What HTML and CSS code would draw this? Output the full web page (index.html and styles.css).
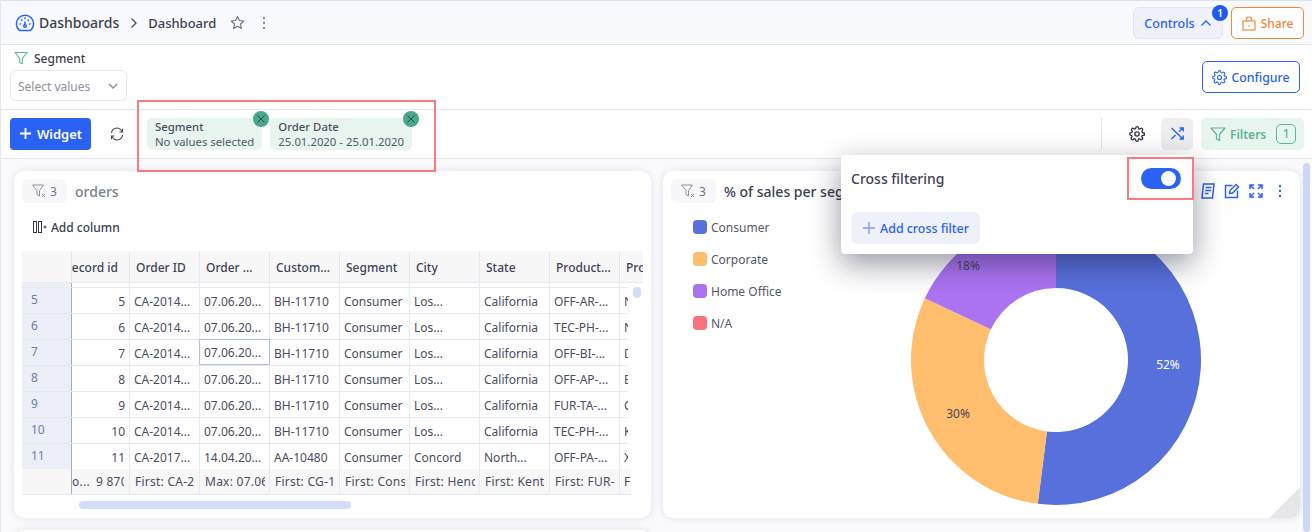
FILE: index.html
```html
<!DOCTYPE html>
<html lang="en">
<head>
<meta charset="utf-8">
<title>Dashboard</title>
<link rel="stylesheet" href="styles.css">
</head>
<body>
<div class="page">
  <header class="topbar">
    <div class="crumbs">
      <svg class="ico-gauge" width="20" height="20" viewBox="0 0 20 20" fill="none" stroke="#2962f5" stroke-width="1.5" stroke-linecap="round"><path d="M5 17.500h10a1 1 0 0 0 .8-.4A8.600 8.600 0 1 0 4.200 17.100a1 1 0 0 0 .8.4z"/><circle cx="10" cy="13" r="1.300"/><path d="M10 11.500V9M5 11h.6M14.400 11h.6M6.500 7l.4.4M13.500 7l-.4.4M10 4.800v.6"/></svg>
      <span class="crumb-root">Dashboards</span>
      <svg class="crumb-sep" width="8" height="12" viewBox="0 0 8 12" fill="none" stroke="#4a4d5e" stroke-width="1.300"><path d="M1.500 1.500 6 6l-4.500 4.500"/></svg>
      <span class="crumb-page">Dashboard</span>
      <svg class="star" width="15" height="15" viewBox="0 0 16 16" fill="none" stroke="#6e7182" stroke-width="1.200" stroke-linejoin="round"><path d="m8 1.500 2 4.300 4.700.6-3.500 3.200.9 4.700L8 12l-4.100 2.300.9-4.700L1.300 6.400 6 5.800z"/></svg>
      <svg class="kebab" width="4" height="14" viewBox="0 0 4 14" fill="#6e7182"><circle cx="2" cy="2" r="1.100"/><circle cx="2" cy="7" r="1.100"/><circle cx="2" cy="12" r="1.100"/></svg>
    </div>
    <div class="top-actions">
      <button class="btn-controls">Controls
        <svg width="12" height="8" viewBox="0 0 12 8" fill="none" stroke="#2962f5" stroke-width="1.300"><path d="M1.500 6.500 6 2l4.500 4.500"/></svg>
        <span class="badge-one">1</span>
      </button>
      <button class="btn-share">
        <svg width="14" height="15" viewBox="0 0 14 15" fill="none" stroke="#f0883e" stroke-width="1.200"><rect x="1" y="5" width="12" height="9"/><path d="M4.500 5V3.500a2.500 2.500 0 0 1 5 0V5M7 9v1.500"/></svg>
        Share
      </button>
    </div>
  </header>

  <section class="controls">
    <div class="control-field">
      <div class="control-label">
        <svg width="14" height="14" viewBox="0 0 14 14" fill="none" stroke="#5fb39a" stroke-width="1.100" stroke-linejoin="round"><path d="M1 1.500h12L8.300 7.500v5.300L5.700 11.500v-4z"/></svg>
        Segment
      </div>
      <div class="select">
        <span>Select values</span>
        <svg width="10" height="7" viewBox="0 0 10 7" fill="none" stroke="#8d909e" stroke-width="1.500"><path d="m1 1 4 4 4-4"/></svg>
      </div>
    </div>
    <button class="btn-configure">
      <svg width="15" height="15" viewBox="0 0 24 24" fill="none" stroke="#2962f5" stroke-width="1.800"><circle cx="12" cy="12" r="3.200"/><path d="M19.400 15a1.700 1.700 0 0 0 .3 1.800l.1.100a2 2 0 1 1-2.900 2.900l-.1-.1a1.700 1.700 0 0 0-2.800 1.200V21a2 2 0 1 1-4 0v-.1A1.700 1.700 0 0 0 7 19.700l-.1.100A2 2 0 1 1 4 16.900l.1-.1a1.700 1.700 0 0 0-1.200-2.800H3a2 2 0 1 1 0-4h.1A1.700 1.700 0 0 0 4.300 7l-.1-.1A2 2 0 1 1 7.100 4l.1.100a1.700 1.700 0 0 0 1.800.3h.1a1.700 1.700 0 0 0 1-1.500V3a2 2 0 1 1 4 0v.1a1.700 1.700 0 0 0 2.800 1.200l.1-.1A2 2 0 1 1 20 7.100l-.1.1a1.700 1.700 0 0 0-.3 1.800v.1a1.700 1.700 0 0 0 1.500 1h.2a2 2 0 1 1 0 4h-.1a1.700 1.700 0 0 0-1.800.9z"/></svg>
      Configure
    </button>
  </section>

  <section class="toolbar">
    <div class="tool-left">
      <button class="btn-widget">
        <svg width="13" height="13" viewBox="0 0 13 13" fill="none" stroke="#fff" stroke-width="1.800"><path d="M6.500 1v11M1 6.500h11"/></svg>
        Widget
      </button>
      <svg class="refresh" width="14" height="14" viewBox="0 0 14 14" fill="none" stroke="#44475a" stroke-width="1.100"><path d="M1.500 6A5.500 5.500 0 0 1 11.500 3.500L12.500 5M12.500 1.800V5H9.500M12.500 8A5.500 5.500 0 0 1 2.500 10.500L1.500 9M1.500 12.200V9h3"/></svg>
      <div class="chips">
        <div class="chip">
          <b>Segment</b><span>No values selected</span>
          <i class="chip-x"><svg width="8" height="8" viewBox="0 0 8 8" stroke="#22483d" stroke-width=".9"><path d="m.5.500 7 7M7.500.500l-7 7"/></svg></i>
        </div>
        <div class="chip">
          <b>Order Date</b><span>25.01.2020 - 25.01.2020</span>
          <i class="chip-x"><svg width="8" height="8" viewBox="0 0 8 8" stroke="#22483d" stroke-width=".9"><path d="m.5.500 7 7M7.500.500l-7 7"/></svg></i>
        </div>
      </div>
    </div>
    <div class="tool-right">
      <span class="tool-sep"></span>
      <svg class="gear" width="16" height="16" viewBox="0 0 24 24" fill="none" stroke="#33364a" stroke-width="2"><circle cx="12" cy="12" r="3.200"/><path d="M19.400 15a1.700 1.700 0 0 0 .3 1.800l.1.100a2 2 0 1 1-2.900 2.900l-.1-.1a1.700 1.700 0 0 0-2.800 1.200V21a2 2 0 1 1-4 0v-.1A1.700 1.700 0 0 0 7 19.700l-.1.100A2 2 0 1 1 4 16.900l.1-.1a1.700 1.700 0 0 0-1.200-2.800H3a2 2 0 1 1 0-4h.1A1.700 1.700 0 0 0 4.300 7l-.1-.1A2 2 0 1 1 7.100 4l.1.100a1.700 1.700 0 0 0 1.800.3h.1a1.700 1.700 0 0 0 1-1.500V3a2 2 0 1 1 4 0v.1a1.700 1.700 0 0 0 2.800 1.200l.1-.1A2 2 0 1 1 20 7.100l-.1.1a1.700 1.700 0 0 0-.3 1.800v.1a1.700 1.700 0 0 0 1.500 1h.2a2 2 0 1 1 0 4h-.1a1.700 1.700 0 0 0-1.800.9z"/></svg>
      <button class="btn-shuffle">
        <svg width="13" height="13" viewBox="0 0 13 13" fill="none" stroke="#2962f5" stroke-width="1.400"><path d="M.5 1 12 12M.5 12l4-4M8 4.700 12 1M8.500 1H12.200v3.500M8.500 12h3.700V8.500"/></svg>
      </button>
      <button class="btn-filters">
        <svg width="16" height="16" viewBox="0 0 16 16" fill="none" stroke="#5fb39a" stroke-width="1.200" stroke-linejoin="round"><path d="M1 2h14L9.500 8.500v6L6.500 13V8.500z"/></svg>
        Filters
        <span class="filters-count">1</span>
      </button>
    </div>
  </section>

  <main class="board">
    <article class="card">
      <div class="card-head">
        <span class="filter-chip">
          <svg width="15" height="14" viewBox="0 0 15 14" fill="none" stroke="#8d909e" stroke-width="1"><path d="M.5 1h11L7.500 6.500v5.500L5 10.500v-4zM10 10l3 3M13 10l-3 3"/></svg>
          3
        </span>
        <span class="card-title muted">orders</span>
      </div>
      <div class="add-column">
        <svg width="14" height="12" viewBox="0 0 14 12" fill="none" stroke="#33364a" stroke-width="1"><rect x=".5" y=".5" width="3" height="11"/><rect x="5.500" y=".5" width="3" height="11"/><path d="M10.500 6h3M12 4.500v3"/></svg>
        Add column
      </div>
      <div class="table">
        <div class="t-head">
          <div class="idx"></div>
          <div class="c c0 th"><span>Record id</span></div>
          <div class="c th">Order ID</div>
          <div class="c th">Order ...</div>
          <div class="c th">Custom...</div>
          <div class="c th">Segment</div>
          <div class="c th">City</div>
          <div class="c th">State</div>
          <div class="c th">Product...</div>
          <div class="c th last">Pro</div>
        </div>
        <div class="t-gap"><div class="idx"></div><div class="c c0"></div><div class="c"></div><div class="c"></div><div class="c"></div><div class="c"></div><div class="c"></div><div class="c"></div><div class="c"></div><div class="c last"></div></div>
        <div class="t-body">
          <div class="row"><div class="idx">5</div><div class="c c0 num">5</div><div class="c">CA-2014...</div><div class="c">07.06.20...</div><div class="c">BH-11710</div><div class="c">Consumer</div><div class="c">Los...</div><div class="c">California</div><div class="c">OFF-AR-...</div><div class="c last">N</div></div>
          <div class="row"><div class="idx">6</div><div class="c c0 num">6</div><div class="c">CA-2014...</div><div class="c">07.06.20...</div><div class="c">BH-11710</div><div class="c">Consumer</div><div class="c">Los...</div><div class="c">California</div><div class="c">TEC-PH-...</div><div class="c last">N</div></div>
          <div class="row"><div class="idx">7</div><div class="c c0 num">7</div><div class="c">CA-2014...</div><div class="c selected">07.06.20...</div><div class="c">BH-11710</div><div class="c">Consumer</div><div class="c">Los...</div><div class="c">California</div><div class="c">OFF-BI-...</div><div class="c last">D</div></div>
          <div class="row"><div class="idx">8</div><div class="c c0 num">8</div><div class="c">CA-2014...</div><div class="c">07.06.20...</div><div class="c">BH-11710</div><div class="c">Consumer</div><div class="c">Los...</div><div class="c">California</div><div class="c">OFF-AP-...</div><div class="c last">E</div></div>
          <div class="row"><div class="idx">9</div><div class="c c0 num">9</div><div class="c">CA-2014...</div><div class="c">07.06.20...</div><div class="c">BH-11710</div><div class="c">Consumer</div><div class="c">Los...</div><div class="c">California</div><div class="c">FUR-TA-...</div><div class="c last">C</div></div>
          <div class="row"><div class="idx">10</div><div class="c c0 num">10</div><div class="c">CA-2014...</div><div class="c">07.06.20...</div><div class="c">BH-11710</div><div class="c">Consumer</div><div class="c">Los...</div><div class="c">California</div><div class="c">TEC-PH-...</div><div class="c last">K</div></div>
          <div class="row"><div class="idx">11</div><div class="c c0 num">11</div><div class="c">CA-2017...</div><div class="c">14.04.20...</div><div class="c">AA-10480</div><div class="c">Consumer</div><div class="c">Concord</div><div class="c">North...</div><div class="c">OFF-PA-...</div><div class="c last">X</div></div>
        </div>
        <div class="t-foot">
          <div class="idx"></div>
          <div class="c c0 foot-split"><span>o...</span><span class="foot-sum">9 870</span></div>
          <div class="c"><span class="clip">First: CA-2014</span></div>
          <div class="c"><span class="clip">Max: 07.06.2014</span></div>
          <div class="c"><span class="clip">First: CG-12520</span></div>
          <div class="c"><span class="clip">First: Consumer</span></div>
          <div class="c"><span class="clip">First: Henderson</span></div>
          <div class="c"><span class="clip">First: Kentucky</span></div>
          <div class="c"><span class="clip">First: FUR-BO</span></div>
          <div class="c last">F</div>
        </div>
        <span class="v-thumb"></span>
      </div>
      <div class="h-track"><span class="h-thumb"></span></div>
    </article>

    <article class="card chart-card">
      <div class="card-head">
        <span class="filter-chip">
          <svg width="15" height="14" viewBox="0 0 15 14" fill="none" stroke="#8d909e" stroke-width="1"><path d="M.5 1h11L7.500 6.500v5.500L5 10.500v-4zM10 10l3 3M13 10l-3 3"/></svg>
          3
        </span>
        <span class="card-title">% of sales per segment</span>
        <div class="card-icons">
          <svg width="14" height="16" viewBox="0 0 14 16" fill="none" stroke="#2962f5" stroke-width="1.500"><path d="M2.500 1h10.500L11.500 15H1z"/><path d="M4.500 4.500h6M4.200 7.500h6M4 10.500h3.500"/></svg>
          <svg width="16" height="16" viewBox="0 0 16 16" fill="none" stroke="#2962f5" stroke-width="1.500"><path d="M8.500 2.500H1.500v12h12V7.500"/><path d="m5.500 10.500.5-3L12 1.500l2.500 2.500-6 6z"/></svg>
          <svg width="14" height="14" viewBox="0 0 14 14" fill="none" stroke="#2962f5" stroke-width="1.500"><path d="M1 5V1h4M9 1h4v4M13 9v4H9M5 13H1V9M1.500 1.500l3.500 3.500M12.500 1.500 9 5M12.500 12.500 9 9M1.500 12.500 5 9"/></svg>
          <svg class="card-kebab" width="4" height="14" viewBox="0 0 4 14" fill="#2962f5"><circle cx="2" cy="2" r="1.200"/><circle cx="2" cy="7" r="1.200"/><circle cx="2" cy="12" r="1.200"/></svg>
        </div>
      </div>
      <div class="chart-body">
        <ul class="legend">
          <li><i class="dot dot-blue"></i>Consumer</li>
          <li><i class="dot dot-orange"></i>Corporate</li>
          <li><i class="dot dot-purple"></i>Home Office</li>
          <li><i class="dot dot-red"></i>N/A</li>
        </ul>
        <svg class="pie" width="292" height="292" viewBox="-146 -146 292 292">
          <path fill="#5870dc" d="M0-145A145 145 0 1 1-18.200 143.850L-9.040 71.430A72 72 0 1 0 0-72z"/>
          <path fill="#ffbd6e" d="M-18.200 143.850A145 145 0 0 1-131.200-61.700L-65.150-30.660A72 72 0 0 0-9.040 71.430z"/>
          <path fill="#ab73f2" d="M-131.200-61.700A145 145 0 0 1 0-145V-72A72 72 0 0 0-65.150-30.660z"/>
          <text x="112" y="9" class="pie-label light" text-anchor="middle">52%</text>
          <text x="-98" y="58" class="pie-label" text-anchor="middle">30%</text>
          <text x="-88" y="-90" class="pie-label" text-anchor="middle">18%</text>
        </svg>
      </div>
      <span class="fold"></span>
    </article>

    <article class="card stub"></article>
  </main>

  <span class="page-scroll"></span>

  <aside class="popover">
    <div class="pop-head">
      <span>Cross filtering</span>
      <span class="toggle"><i></i></span>
    </div>
    <button class="btn-add-cross">
      <svg width="14" height="14" viewBox="0 0 14 14" fill="none" stroke="#7f9df5" stroke-width="1.400"><path d="M7 1v12M1 7h12"/></svg>
      Add cross filter
    </button>
  </aside>

  <span class="mark mark-chips"></span>
  <span class="mark mark-toggle"></span>
</div>
</body>
</html>
```

FILE: styles.css
```css
* { box-sizing: border-box; }
html, body { margin: 0; padding: 0; }
body { font-family: "Noto Sans", "Open Sans", sans-serif; font-size: 12px; color: #3f4254; background: #fff; }
button { font-family: inherit; cursor: pointer; }

.page { position: relative; width: 1312px; height: 532px; overflow: hidden; display: flex; flex-direction: column; border-left: 1px solid #e4e6ee; }

.topbar { flex: none; height: 45px; display: flex; align-items: center; justify-content: space-between; padding: 0 8px 0 14px; background: #f8f9fd; border-top: 1px solid #dfe1e8; border-bottom: 1px solid #e4e6ee; }
.crumbs { display: flex; align-items: center; }
.crumb-root { margin-left: 4px; font-size: 14px; font-weight: 500; color: #3c4050; }
.crumb-sep { margin-left: 11px; }
.crumb-page { margin-left: 10px; font-size: 13px; font-weight: 500; color: #3c4050; }
.star { margin-left: 14px; }
.kebab { margin-left: 17px; }

.top-actions { display: flex; gap: 8px; }
.btn-controls { position: relative; width: 90px; height: 32px; display: flex; align-items: center; justify-content: center; gap: 5px; padding: 1px 0 0; background: #eef1f9; border: 1px solid #e2e6f1; border-radius: 6px; font-size: 12.5px; font-weight: 500; color: #2962f5; }
.badge-one { position: absolute; top: -3px; right: -6px; width: 16px; height: 16px; border-radius: 50%; background: #1f5af0; color: #fff; font-size: 10px; font-weight: 600; line-height: 16px; text-align: center; }
.btn-share { width: 73px; height: 32px; display: flex; align-items: center; justify-content: center; gap: 5px; padding: 1px 0 0; background: #fff; border: 1px solid #f0883e; border-radius: 5px; font-size: 12px; font-weight: 500; color: #f0883e; }

.controls { flex: none; height: 65px; display: flex; align-items: flex-start; justify-content: space-between; padding: 4px 12px 0 9px; background: #fff; border-bottom: 1px solid #e4e6ee; }
.control-label { display: flex; align-items: center; gap: 6px; height: 18px; margin: 0 0 3px 4px; font-size: 12px; font-weight: 500; color: #3c4050; }
.select { width: 117px; height: 31px; display: flex; align-items: center; justify-content: space-between; padding: 1px 8px 0 7px; border: 1px solid #e6e7ec; border-radius: 6px; color: #8d909e; font-size: 12px; }
.btn-configure { margin-top: 12px; width: 98px; height: 32px; display: flex; align-items: center; justify-content: center; gap: 4px; padding: 0; background: #fff; border: 1px solid #2962f5; border-radius: 5px; font-size: 12.3px; font-weight: 500; color: #2962f5; }

.toolbar { flex: none; height: 49px; display: flex; align-items: center; justify-content: space-between; padding: 0 8px 1px 9px; background: #fff; border-bottom: 1px solid #e4e6ee; }
.tool-left, .tool-right { display: flex; align-items: center; }
.btn-widget { width: 81px; height: 32px; display: flex; align-items: center; justify-content: center; gap: 5px; padding: 0; background: #2962f5; border: 0; border-radius: 4px; color: #fff; font-size: 13px; font-weight: 600; }
.refresh { margin-left: 19px; }
.chips { display: flex; gap: 8px; margin-left: 23px; }
.chip { position: relative; height: 32px; padding: 0 8px; display: flex; flex-direction: column; justify-content: center; background: #e8f5ef; border-radius: 5px; font-size: 11.35px; line-height: 15px; color: #555868; white-space: nowrap; }
.chip b { font-weight: 500; color: #4a4d5e; }
.chip-x { position: absolute; top: -7px; right: -7px; width: 16px; height: 16px; display: flex; align-items: center; justify-content: center; border-radius: 50%; background: #4aa68c; }

.tool-sep { width: 1px; height: 32px; background: #e4e6ee; }
.gear { margin-left: 27px; }
.btn-shuffle { margin-left: 16px; width: 32px; height: 32px; display: flex; align-items: center; justify-content: center; padding: 0; background: #eeeeef; border: 0; border-radius: 5px; }
.btn-filters { margin-left: 8px; width: 103px; height: 32px; display: flex; align-items: center; gap: 4px; padding: 1px 0 0 9px; background: #e8f5ef; border: 0; border-radius: 5px; color: #5fb39a; font-size: 12px; font-weight: 600; }
.filters-count { margin-left: 6px; width: 20px; height: 20px; border: 1px solid #5fb39a; border-radius: 5px; line-height: 18px; text-align: center; font-weight: 500; }

.board { flex: 1; display: grid; grid-template-columns: 637px 637px; grid-auto-rows: 347px; gap: 12px; padding: 12px 0 0 13px; background: #fafafc; overflow: hidden; }
.card { position: relative; background: #fff; border-radius: 10px; box-shadow: 0 0 7px rgba(190, 195, 215, .45); padding: 8px; }
.card-head { display: flex; align-items: center; height: 24px; }
.filter-chip { width: 45px; height: 24px; display: flex; align-items: center; justify-content: center; gap: 3px; background: #f7f7f9; border-radius: 6px; color: #6e7182; font-size: 12px; }
.card-title { margin-left: 8px; font-size: 14px; font-weight: 500; color: #3c4050; white-space: nowrap; }
.card-title.muted { color: #7b7f8f; }

.add-column { display: flex; align-items: center; gap: 4px; height: 20px; margin: 14px 0 0 11px; font-size: 12px; font-weight: 500; color: #3c4050; }

.table { position: relative; margin-top: 14px; width: 621px; height: 244px; overflow: hidden; font-size: 12px; color: #4a4d5e; }
.t-head, .t-gap, .row, .t-foot { display: flex; white-space: nowrap; }
.idx { flex: none; width: 50px; border-right: 1px solid #a7aabf; padding-left: 9px; }
.c { flex: none; width: 70px; overflow: hidden; padding: 0 4px; border-right: 1px solid #e8e9ef; }
.c0 { width: 58px; }
.last { border-right: 0; }

.t-head { width: 621px; height: 32px; background: #f7f7f8; border-bottom: 1px solid #e8e9f2; align-items: stretch; line-height: 34px; }
.t-head .idx { border-right: 1px solid #e4e5ea; }
.th { padding: 0 6px; font-weight: 500; color: #3f4254; }
.th.c0 { display: flex; justify-content: flex-end; padding: 0 11px 0 0; }
.th.c0 span { flex: none; }
.t-gap { width: 606px; height: 4px; }
.t-gap .idx { background: #eceff8; }
.t-gap .c { border-right-color: #e8e9ef; }
.t-body { width: 606px; overflow: hidden; border-top: 1px solid #e8e9ef; }
.row { height: 26px; line-height: 27px; border-bottom: 1px solid #e8e9ef; }
.row .idx { background: #eceff8; color: #6d7ea5; line-height: 24px; }
.num { text-align: right; padding-right: 4px; }
.row .selected { margin-left: -1px; width: 71px; height: 26px; margin-top: -1px; padding-left: 5px; line-height: 28px; border-right: 0; box-shadow: inset 0 0 0 1px #a9bdf5; }
.t-foot { width: 609px; height: 26px; line-height: 25px; background: #f7f7f8; border-bottom: 1px solid #e8e9ef; color: #4a4d5e; margin-top: -1px; letter-spacing: .25px; }
.t-foot .idx { background: #f7f7f8; }
.clip { display: block; width: 60px; overflow: hidden; margin-left: 1px; }
.foot-split { display: flex; justify-content: space-between; padding: 0 4px 0 0; }
.foot-sum { margin-right: 1px; width: 28px; overflow: hidden; }
.v-thumb { position: absolute; top: 36px; left: 611px; width: 8px; height: 11px; border-radius: 4px; background: #d3dcf8; }
.h-track { height: 8px; margin: 6px 0 0 57px; }
.h-thumb { display: block; width: 272px; height: 8px; border-radius: 4px; background: #d3dcf8; }

.card-icons { margin-left: auto; display: flex; align-items: center; gap: 9px; padding-right: 10px; }
.card-kebab { margin-left: 6px; }

.chart-body { position: relative; height: 300px; }
.legend { list-style: none; margin: 0; padding: 8px 0 0 22px; }
.legend li { display: flex; align-items: center; gap: 4px; height: 32px; font-size: 12px; color: #555868; }
.dot { width: 14px; height: 14px; border-radius: 4px; }
.dot-blue { background: #5870dc; }
.dot-orange { background: #ffbd6e; }
.dot-purple { background: #ab73f2; }
.dot-red { background: #f8747c; }
.pie { position: absolute; left: 239px; top: 11px; }
.pie-label { font-size: 12px; fill: #4a4553; }
.pie-label.light { fill: #fff; }
.fold { position: absolute; right: 0; bottom: 0; width: 30px; height: 30px; background: linear-gradient(135deg, transparent 50%, #e6e6e8 50%); border-bottom-right-radius: 10px; }

.page-scroll { position: absolute; top: 163px; left: 1302px; width: 7px; height: 369px; border-radius: 4px; background: #ccd6f5; }

.popover { position: absolute; left: 840px; top: 155px; width: 352px; height: 99px; padding: 0 10px; background: #fff; border-radius: 4px; box-shadow: 0 10px 30px rgba(20, 22, 50, .45); }
.pop-head { display: flex; align-items: center; justify-content: space-between; height: 47px; padding-right: 2px; font-size: 14px; font-weight: 500; color: #3f4254; }
.toggle { width: 40px; height: 21px; padding: 3px 3px 3px 20px; border-radius: 11px; background: #2962f5; }
.toggle i { display: block; width: 15px; height: 15px; border-radius: 50%; background: #fff; }
.btn-add-cross { margin-top: 10px; width: 129px; height: 32px; display: flex; align-items: center; justify-content: center; gap: 4px; padding: 0; background: #eef1f9; border: 0; border-radius: 6px; color: #2962f5; font-size: 12.4px; font-weight: 500; }

.mark { position: absolute; border: 2px solid #fb7a7e; pointer-events: none; }
.mark-chips { left: 136px; top: 100px; width: 299px; height: 72px; }
.mark-toggle { left: 1126px; top: 157px; width: 67px; height: 43px; }
```
